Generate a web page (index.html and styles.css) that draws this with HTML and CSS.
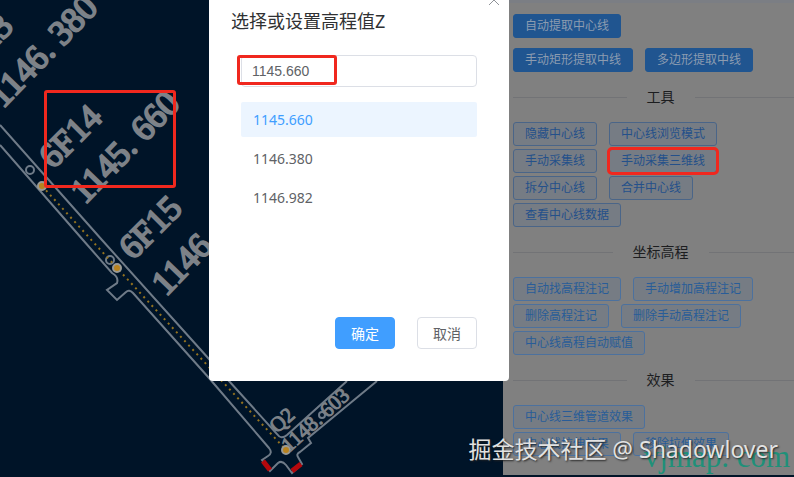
FILE: index.html
```html
<!DOCTYPE html>
<html lang="zh-CN">
<head>
    <meta charset="UTF-8">
    <meta name="viewport" content="width=device-width, initial-scale=1.0">
    <title>选择或设置高程值Z</title>
    <link rel="stylesheet" href="styles.css">
</head>
<body>
    <main class="map">
        <svg class="drawing" width="503" height="477" viewBox="0 0 503 477">
            <g class="pipe">
                <path d="M0 125 L102 240 L209 359 L277 434 Q281 440 287 435 L347 381"/>
                <path d="M0 145 L83 240 L112 273 Q119 277 117 283 L107 290 L117 300 L126 292 Q129 289 133 293 L209 378 L269 448 Q273 453 268 456 L262 460 L270 471 L278 463 Q282 460 286 465 L292 473 L302 464 L298 457 Q296 454 300 452 L311 443 L308 438 L377 381"/>
                <circle cx="30" cy="170" r="4"/>
                <circle cx="110" cy="260" r="4"/>
                <circle cx="322" cy="415" r="3"/>
            </g>
            <path class="center-line" d="M42 186 L117 268 L286 450"/>
            <path class="end-mark" d="M263 461 L270 470 M292 471 L301 464"/>
            <g class="node">
                <circle cx="42" cy="186" r="4"/>
                <circle cx="117" cy="268" r="4"/>
                <circle cx="286" cy="450" r="4"/>
            </g>
            <g class="label">
                <text transform="translate(-36 79) rotate(-45)">6F13</text>
                <text transform="translate(3 109) rotate(-46)">1146. 380</text>
                <text transform="translate(53 170) rotate(-45)">6F14</text>
                <text transform="translate(85 205) rotate(-46)">1145. 660</text>
                <text transform="translate(133 261) rotate(-45)">6F15</text>
                <text transform="translate(166 297) rotate(-46)">1146. 982</text>
            </g>
            <g class="label small">
                <text transform="translate(277 434) rotate(-42)">Q2</text>
                <text transform="translate(289 453) rotate(-42)">1148. 603</text>
            </g>
        </svg>
        <span class="mark mark-label"></span>
    </main>

    <aside class="panel">
        <div class="group primary">
            <div class="row"><button>自动提取中心线</button></div>
            <div class="row"><button>手动矩形提取中线</button><button>多边形提取中线</button></div>
        </div>
        <h3 class="divider">工具</h3>
        <div class="group tools">
            <div class="row"><button>隐藏中心线</button><button>中心线浏览模式</button></div>
            <div class="row"><button>手动采集线</button><button class="picked">手动采集三维线</button></div>
            <div class="row"><button>拆分中心线</button><button>合并中心线</button></div>
            <div class="row"><button>查看中心线数据</button></div>
        </div>
        <h3 class="divider">坐标高程</h3>
        <div class="group">
            <div class="row"><button>自动找高程注记</button><button>手动增加高程注记</button></div>
            <div class="row"><button>删除高程注记</button><button>删除手动高程注记</button></div>
            <div class="row"><button>中心线高程自动赋值</button></div>
        </div>
        <h3 class="divider">效果</h3>
        <div class="group">
            <div class="row"><button>中心线三维管道效果</button></div>
            <div class="row"><button>中心线拉伸效果</button><button>移除拉伸效果</button></div>
        </div>
    </aside>

    <section class="dialog" role="dialog" aria-labelledby="dialog-title">
        <button class="close" aria-label="关闭">
            <svg width="10" height="10" viewBox="0 0 10 10"><path d="M0 0 L10 10 M10 0 L0 10"/></svg>
        </button>
        <h2 id="dialog-title">选择或设置高程值Z</h2>
        <div class="field">
            <input type="text" value="1145.660" aria-labelledby="dialog-title">
            <span class="mark mark-input"></span>
        </div>
        <ul class="options">
            <li><button class="active">1145.660</button></li>
            <li><button>1146.380</button></li>
            <li><button>1146.982</button></li>
        </ul>
        <div class="actions">
            <button class="ok">确定</button>
            <button class="cancel">取消</button>
        </div>
    </section>

    <span class="site">vjmap. com</span>
    <span class="credit">掘金技术社区 @ Shadowlover</span>
</body>
</html>
```

FILE: styles.css
```css
* {
    box-sizing: border-box;
}
body {
    margin: 0;
    min-height: 100vh;
    display: flex;
    position: relative;
    overflow: hidden;
    background: #001428;
    font-family: "Noto Sans", "Noto Sans CJK SC", sans-serif;
}
button,
input {
    font-family: inherit;
    margin: 0;
}
.map {
    flex: 1;
    min-width: 0;
    position: relative;
}
.drawing {
    display: block;
}
.pipe {
    fill: none;
    stroke: #6f7b88;
    stroke-width: 2;
}
.center-line {
    fill: none;
    stroke: #94731f;
    stroke-width: 2;
    stroke-dasharray: 2 4;
}
.end-mark {
    stroke: #b5080c;
    stroke-width: 5;
}
.node {
    fill: #b8831f;
    stroke: #9a9a94;
    stroke-width: 2;
}
.label {
    font-family: "Liberation Serif", serif;
    font-size: 35px;
    fill: #7d8288;
    stroke: #7d8288;
    stroke-width: 2;
}
.small {
    font-size: 21px;
    stroke-width: 1;
}
.mark {
    position: absolute;
    border: 3px solid #f0281e;
    border-radius: 3px;
    pointer-events: none;
}
.mark-label {
    left: 44px;
    top: 90px;
    width: 132px;
    height: 98px;
}

/* side panel */
.panel {
    width: 291px;
    margin-bottom: 2px;
    padding: 0 0 0 10px;
    background: #808080;
    border-top: 3px solid #7b7e84;
}
.row {
    display: flex;
    gap: 12px;
    margin-bottom: 3px;
}
.row button {
    height: 24px;
    padding: 0 11px;
    border: 1px solid #4c719e;
    border-radius: 3px;
    background: #767c84;
    color: #285c98;
    font-size: 12px;
    line-height: 20px;
    white-space: nowrap;
}
.tools button {
    border-color: #4a6588;
    color: #24508a;
}
.primary {
    padding-top: 11px;
}
.primary .row {
    margin-bottom: 10px;
}
.primary button {
    border-color: #205590;
    background: #205590;
    color: #8c9cb0;
}
.row .picked {
    outline: 3px solid #f0281e;
    outline-offset: -1px;
}
.divider {
    display: flex;
    align-items: center;
    gap: 20px;
    margin: 15px -14px 15px 0;
    color: #1c1d1f;
    font-size: 14px;
    font-weight: normal;
    line-height: 20px;
}
.divider::before,
.divider::after {
    content: "";
    flex: 1;
    border-top: 1px solid #727376;
}

/* dialog */
.dialog {
    position: absolute;
    top: 0;
    left: 209px;
    width: 300px;
    padding: 8px 32px 32px;
    border-radius: 0 0 4px 4px;
    background: #fff;
    color: #606266;
}
.dialog h2 {
    margin: 0 0 20px -10px;
    color: #303133;
    font-size: 18px;
    font-weight: normal;
    line-height: 27px;
}
.close {
    position: absolute;
    top: -5px;
    right: 10px;
    padding: 0;
    border: 0;
    background: none;
}
.close svg {
    display: block;
    stroke: #909399;
    fill: none;
}
.field {
    position: relative;
}
.field input {
    display: block;
    width: 100%;
    height: 32px;
    padding: 0 10px;
    border: 1px solid #dcdfe6;
    border-radius: 4px;
    color: #606266;
    font-family: "Liberation Sans", sans-serif;
    font-size: 14px;
}
.mark-input {
    left: -4px;
    top: 0;
    width: 100px;
    height: 30px;
}
.options {
    list-style: none;
    margin: 15px 0 102px;
    padding: 0;
    display: grid;
    gap: 4px;
}
.options button {
    display: block;
    width: 100%;
    height: 35px;
    padding: 0 12px;
    border: 0;
    border-radius: 2px;
    background: none;
    color: #606266;
    font-size: 14px;
    text-align: left;
}
.options .active {
    background: #ecf5ff;
    color: #409eff;
}
.actions {
    display: flex;
    justify-content: flex-end;
    gap: 22px;
}
.actions button {
    width: 60px;
    height: 32px;
    padding: 0;
    border: 1px solid #dcdfe6;
    border-radius: 4px;
    background: #fff;
    color: #606266;
    font-size: 14px;
}
.actions .ok {
    border-color: #409eff;
    background: #409eff;
    color: #fff;
}

.site {
    position: absolute;
    right: 4px;
    bottom: 4px;
    color: #1f9079;
    font-family: "Liberation Serif", serif;
    font-size: 31px;
    line-height: 32px;
}
.credit {
    position: absolute;
    right: 16px;
    bottom: 12px;
    color: #e2e2e2;
    font-size: 23px;
    line-height: 32px;
    text-shadow: 1px 1px 2px #222;
}
```
